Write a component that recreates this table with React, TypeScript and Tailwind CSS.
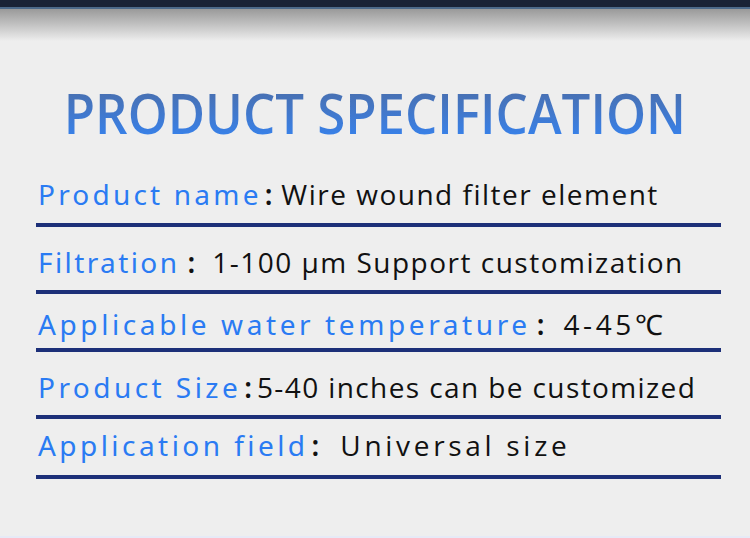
const rows = [
  { label: "Product name", value: "Wire wound filter element", row: "pt-[39px] pb-[14px]", lt: "tracking-[3.2px]", colon: "ml-[3px] mr-[9px]", track: "tracking-[1.5px]" },
  { label: "Filtration", value: "1-100 μm Support customization", row: "pt-[20px] pb-[13px]", lt: "tracking-[2.4px]", colon: "ml-[8px] mr-[17px]", track: "tracking-[1.5px]" },
  { label: "Applicable water temperature", value: "4-45℃", row: "pt-[15px] pb-[9px]", lt: "tracking-[3.6px]", colon: "ml-[6px] mr-[19px]", track: "tracking-[3.6px]" },
  { label: "Product Size", value: "5-40 inches can be customized", row: "pt-[20px] pb-[13px]", lt: "tracking-[3.45px]", colon: "ml-[3px] mr-[5px]", track: "tracking-[1.4px]" },
  { label: "Application field", value: "Universal size", row: "pt-[11px] pb-[15px]", lt: "tracking-[3.45px]", colon: "ml-[3px] mr-[21px]", track: "tracking-[3.7px]" },
]

export default function App() {
  return (
    <div className="w-[750px] h-[538px] bg-[#eeeeee] overflow-hidden flex flex-col">
      {/* top band */}
      <div className="h-[7px] bg-[#1a2336]" />
      <div className="h-[2px] bg-[#4d6a8a]" />
      <div className="h-[32px] bg-gradient-to-b from-[#9a9a9a] to-[#eeeeee]" />

      <h1
        className="mt-[43px] text-center text-[56px] leading-none font-semibold scale-x-[0.91] bg-gradient-to-b from-[#4a6da8] to-[#3582ee] bg-clip-text text-transparent self-center whitespace-nowrap"
        style={{ fontFamily: '"Open Sans", sans-serif' }}
      >
        PRODUCT SPECIFICATION
      </h1>

      <div className="ml-[36px] w-[685px] flex flex-col">
        {rows.map((r) => (
          <div key={r.label} className={`${r.row} border-b-4 border-[#1c2f78]`}>
            <div className="flex items-baseline pl-[2px] whitespace-nowrap">
              <span
                className={`${r.lt} text-[28px] leading-[30px] text-[#2a7bf3]`}
                style={{ fontFamily: '"Noto Sans", sans-serif' }}
              >
                {r.label}
              </span>
              <span
                className={`${r.colon} text-[28px] leading-[30px] font-semibold text-[#111]`}
                style={{ fontFamily: '"Noto Sans", sans-serif' }}
              >
                :
              </span>
              <span
                className={`${r.track} text-[28px] leading-[30px] text-[#111]`}
                style={{ fontFamily: '"Open Sans", sans-serif' }}
              >
                {r.value}
              </span>
            </div>
          </div>
        ))}
      </div>

      <div className="mt-auto h-[2px] bg-[#e6eaf6]" />
    </div>
  )
}
